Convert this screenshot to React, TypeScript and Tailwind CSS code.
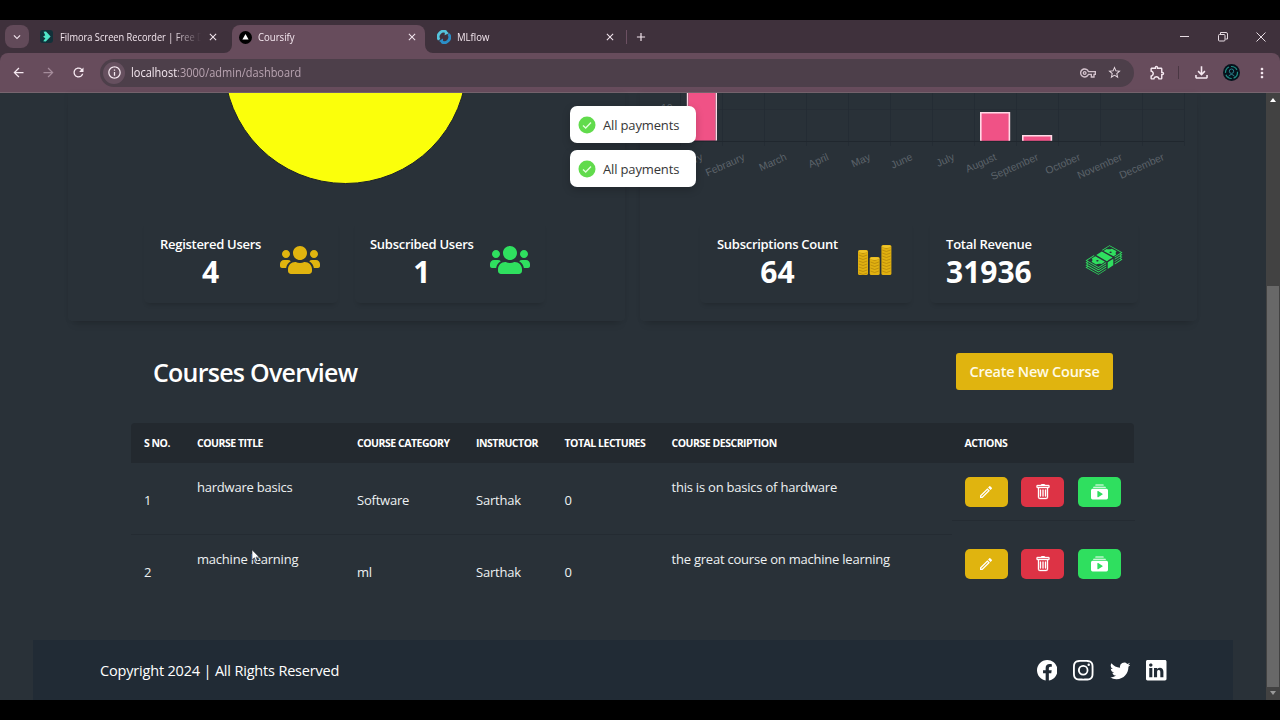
import type { ReactNode } from "react";
import { BsCollectionPlayFill, BsFacebook, BsInstagram, BsLinkedin, BsTrash, BsTwitter } from "react-icons/bs";
import { FaUsers } from "react-icons/fa";
import { GiMoneyStack } from "react-icons/gi";
import {
  MdArrowBack,
  MdArrowForward,
  MdMoreVert,
  MdOutlineExtension,
  MdOutlineFileDownload,
  MdOutlineInfo,
  MdOutlineModeEdit,
  MdOutlineVpnKey,
  MdRefresh,
  MdStarBorder,
  MdClose,
  MdAdd,
  MdKeyboardArrowDown,
} from "react-icons/md";

function TabStrip() {
  return (
    <div className="flex h-[33px] shrink-0 bg-[#3f313c] text-[11px] text-[#f3e6ee]">
      <div className="flex w-[232px] items-center pl-[5px]">
        <div className="flex h-[23px] w-[24px] items-center justify-center rounded-[8px] bg-[#624a59]">
          <MdKeyboardArrowDown size={14} />
        </div>
        <div className="ml-[11px] flex h-[13px] w-[13px] items-center justify-center rounded-[3px] bg-[#12313a]">
          <svg width="9" height="11" viewBox="0 0 9 11">
            <path d="M1.6.7 4 .4 8.6 5.4 3.8 10.6 1.2 10.3 3.4 7.3 1 5.8 3.2 4.2Z" fill="#4fe6c8" />
          </svg>
        </div>
        <div className="ml-[7px] w-[141px] overflow-hidden pt-px whitespace-nowrap [mask-image:linear-gradient(to_right,black_80%,transparent)]">
          <span className="inline-block origin-left scale-x-[0.84]">Filmora Screen Recorder | Free D</span>
        </div>
        <MdClose size={12} className="ml-[6px]" />
      </div>
      <div className="relative mt-[5px] flex w-[193px] items-center rounded-t-[8px] bg-[#674c5c] pb-[4px] pl-[7px]">
        <svg className="absolute bottom-0 -left-[8px]" width="8" height="8">
          <path d="M8 0V8H0A8 8 0 0 0 8 0Z" fill="#674c5c" />
        </svg>
        <svg className="absolute -right-[8px] bottom-0" width="8" height="8">
          <path d="M0 0V8H8A8 8 0 0 1 0 0Z" fill="#674c5c" />
        </svg>
        <svg width="13" height="13" viewBox="0 0 13 13">
          <circle cx="6.5" cy="6.5" r="6.5" fill="#000" />
          <path d="M6.5 3 9.6 8.6H3.4Z" fill="#fff" />
        </svg>
        <span className="ml-[6px] inline-block w-[146px] origin-left">
          <span className="inline-block origin-left scale-x-[0.87]">Coursify</span>
        </span>
        <MdClose size={12} className="ml-[2px]" />
      </div>
      <div className="flex flex-1 items-center pl-[12px]">
        <svg width="14" height="14" viewBox="0 0 14 14" fill="none" strokeWidth="2.8">
          <path d="M2.2 9.8A5.4 5.4 0 0 1 9.6 2.2" stroke="#55c4dc" />
          <path d="M11.6 4A5.4 5.4 0 0 1 4.4 11.8" stroke="#2b8fc8" />
          <path d="M8.2.2 12 3.2 7.6 5.2Z" fill="#55c4dc" />
          <path d="M6 8.6 2 11 6.2 13.8Z" fill="#2b8fc8" />
        </svg>
        <span className="ml-[6px] w-[147px] pt-px">
          <span className="inline-block origin-left scale-x-[0.87]">MLflow</span>
        </span>
        <MdClose size={12} />
        <div className="ml-[10px] h-[14px] w-px bg-[#6c5062]" />
        <MdAdd size={14} className="ml-[7px]" />
        <div className="ml-auto flex items-center gap-[26px] pr-[13px]">
          <svg width="12" height="12" stroke="#e6dbe2" fill="none">
            <path d="M1 5.5H10" />
          </svg>
          <svg width="12" height="12" stroke="#e6dbe2" fill="none">
            <rect x="1.5" y="3.5" width="6.5" height="6.5" rx="1" />
            <path d="M3.5 3V1.5H9Q10.5 1.5 10.5 3V8H8.5" />
          </svg>
          <svg width="12" height="12" stroke="#e6dbe2" fill="none">
            <path d="M1.5 1.5 10.5 10.5M10.5 1.5 1.5 10.5" />
          </svg>
        </div>
      </div>
    </div>
  );
}

function AddressBar() {
  return (
    <div className="shrink-0 bg-[#3f313c]">
      <div className="flex h-[40px] items-center rounded-t-[8px] border-b border-[#77656f] bg-[#674c5c] text-[#f6e9f1]">
        <MdArrowBack size={15} className="ml-[11px]" />
        <MdArrowForward size={15} className="ml-[15px] text-[#a58c9b]" />
        <MdRefresh size={15} className="ml-[15px]" />
        <div className="ml-[14px] flex h-[28px] w-[1034px] items-center rounded-full bg-[#4d3f4a] pl-[3px]">
          <div className="flex h-[22px] w-[22px] items-center justify-center rounded-full bg-[#66505f]">
            <MdOutlineInfo size={15} />
          </div>
          <span className="ml-[6px] text-[12px] text-[#b9a4b1]">
            <span className="inline-block origin-left scale-x-[0.917] whitespace-nowrap">
              <span className="text-[#f6e9f1]">localhost</span>:3000/admin/dashboard
            </span>
          </span>
          <MdOutlineVpnKey size={16} className="mr-[11px] ml-auto text-[#d3c2cc]" />
          <MdStarBorder size={15} className="mr-[12px] text-[#e6d8e0]" />
        </div>
        <MdOutlineExtension size={17} className="ml-[15px]" />
        <div className="ml-[12px] h-[13px] w-px bg-[#4a3743]" />
        <MdOutlineFileDownload size={19} className="ml-[13px]" />
        <svg className="ml-[12px]" width="17" height="17" viewBox="0 0 17 17">
          <circle cx="8.5" cy="8.5" r="8.5" fill="#06121c" />
          <circle cx="8.5" cy="8.5" r="6" fill="none" stroke="#1e8f86" strokeWidth="1.2" strokeDasharray="7 2" />
          <circle cx="8.5" cy="7.2" r="2.2" fill="none" stroke="#2a7f8c" />
          <path d="M5.5 12.2Q8.5 8.8 11.5 12.2" fill="none" stroke="#2a7f8c" />
        </svg>
        <MdMoreVert size={16} className="ml-[14px]" />
      </div>
    </div>
  );
}

const months = [
  "January", "Febraury", "March", "April", "May", "June",
  "July", "August", "September", "October", "November", "December",
];

function BarChart() {
  return (
    <svg className="block" width="557" height="127" viewBox="640 93 557 127">
      <g stroke="#242c34">
        {[...months, ""].map((_, i) => (
          <path key={i} d={`M${680.5 + i * 42} 93V146`} />
        ))}
        <path d="M680 109.5H1184" strokeOpacity="0.6" />
        <path d="M672 141.5H1184" stroke="#20272e" />
      </g>
      <g fill="#f05286" stroke="#ffd9e6" strokeWidth="1.6">
        <path d="M687.6 90V140.5M716.2 90V140.5" />
        <rect x="688.4" y="90" width="27" height="50.5" stroke="none" />
        <path d="M980.8 140.8V112.8H1009.4V140.8" />
        <path d="M1022.8 140.8V135.8H1051.4V140.8" />
      </g>
      <text x="661" y="112" fill="#5c636a" fontSize="10.5">10</text>
      <g fill="#5c636a" fontSize="10.4" textAnchor="end">
        {months.map((m, i) => {
          const x = 703.5 + i * 41.95;
          return (
            <text key={m} x={x} y={159.5} transform={`rotate(-24 ${x} 159.5)`}>
              {m}
            </text>
          );
        })}
      </g>
    </svg>
  );
}

function CoinStack({ x, top }: { x: number; top: number }) {
  const rows = Math.floor((29 - top) / 3);
  return (
    <g>
      <rect x={x} y={top} width="10" height={30 - top} rx="1.6" fill="#e0b010" />
      <g fill="none" stroke="#b0830a" strokeWidth="0.7">
        {Array.from({ length: rows }, (_, i) => (
          <path key={i} d={`M${x + 0.8} ${top + 2 + i * 3}Q${x + 5} ${top + 5 + i * 3} ${x + 9.2} ${top + 2 + i * 3}`} />
        ))}
      </g>
      <ellipse cx={x + 5} cy={top + 1.6} rx="4.4" ry="1.3" fill="#f0c52a" />
    </g>
  );
}

function CoinStacks() {
  return (
    <svg width="40" height="30" viewBox="0 0 40 30">
      <CoinStack x={3} top={5} />
      <CoinStack x={14.7} top={12} />
      <CoinStack x={26.4} top={0} />
    </svg>
  );
}

function Stat({ label, value, icon, className }: { label: string; value: string; icon: ReactNode; className: string }) {
  return (
    <div className={`flex h-[83px] items-center rounded-[5px] pb-[3px] shadow-[0_4px_5px_-3px_rgba(0,0,0,0.2)] ${className}`}>
      <div className="flex flex-col items-center pt-[4px] whitespace-nowrap text-white">
        <div className="text-[13px] leading-[20px] font-semibold tracking-[-0.28px]">{label}</div>
        <div className="text-[30px] leading-[36px] font-bold">{value}</div>
      </div>
      {icon}
    </div>
  );
}

function Toast() {
  return (
    <div className="flex h-[37px] w-[126px] items-center rounded-[7px] bg-white pl-[8px] shadow-[0_3px_8px_rgba(0,0,0,0.2)]">
      <svg width="18" height="18" viewBox="0 0 18 18" fill="none">
        <circle cx="9" cy="9" r="8.5" fill="#61db4c" />
        <path d="M5 9.4 7.7 12 13 6.6" stroke="#e2ffdb" strokeWidth="1.4" />
      </svg>
      <span className="ml-[7px] pt-[2px] text-[13px] tracking-[-0.15px] whitespace-nowrap text-[#363636]">All payments</span>
    </div>
  );
}

const courses = [
  { title: "hardware basics", category: "Software", description: "this is on basics of hardware" },
  { title: "machine learning", category: "ml", description: "the great course on machine learning" },
];

const columns = "grid grid-cols-[53px_160px_119px_88.5px_107px_293px_183px] *:pl-[13px]";

function CourseTable() {
  return (
    <div className="mx-[131px] mt-[33px] w-[1003px] text-[13px] whitespace-nowrap text-[#eef1f3]">
      <div className={`${columns} h-[40px] items-center rounded-t-[4px] bg-[#23292f] pt-[2px] text-[10.5px] font-bold tracking-[-0.48px] text-white`}>
        <div>S NO.</div>
        <div>COURSE TITLE</div>
        <div>COURSE CATEGORY</div>
        <div>INSTRUCTOR</div>
        <div>TOTAL LECTURES</div>
        <div>COURSE DESCRIPTION</div>
        <div>ACTIONS</div>
      </div>
      {courses.map((c, i) => (
        <div key={c.title} className={`${columns} h-[72px] tracking-[-0.22px] ${i === 0 ? "[&>*:not(:last-child)]:border-b *:border-[#242b32]" : ""}`}>
          <div className="pt-[27px] leading-5">{i + 1}</div>
          <div className="pt-[14px] leading-5">{c.title}</div>
          <div className="pt-[27px] leading-5">{c.category}</div>
          <div className="pt-[27px] leading-5">Sarthak</div>
          <div className="pt-[27px] leading-5">0</div>
          <div className="pt-[14px] leading-5">{c.description}</div>
          <div className={`flex h-[58px] gap-[13.3px] pt-[14px] text-white ${i === 0 ? "border-b" : ""}`}>
            <button className="flex h-[30px] w-[43.3px] items-center justify-center rounded-[5px] bg-[#e0b40f]">
              <MdOutlineModeEdit size={16} />
            </button>
            <button className="flex h-[30px] w-[43.3px] items-center justify-center rounded-[5px] bg-[#dd3345]">
              <BsTrash size={16} strokeWidth={0.35} />
            </button>
            <button className="flex h-[30px] w-[43.3px] items-center justify-center rounded-[5px] bg-[#2fdf5f]">
              <BsCollectionPlayFill size={17} />
            </button>
          </div>
        </div>
      ))}
    </div>
  );
}

function Scrollbar() {
  return (
    <div className="flex h-full w-[14px] shrink-0 flex-col items-center bg-[#424242]">
      <svg className="mt-[4px]" width="8" height="6">
        <path d="M4 1 7 5H1Z" fill="#fff" />
      </svg>
      <div className="mt-[183px] h-[401px] w-[12px] bg-[#686868]" />
      <svg className="mt-[3px]" width="8" height="6">
        <path d="M4 5 7 1H1Z" fill="#9a9a9a" />
      </svg>
    </div>
  );
}

export default function App() {
  return (
    <div className="flex h-[720px] w-[1280px] flex-col overflow-hidden bg-black py-[20px] font-['Open_Sans',sans-serif]">
      <TabStrip />
      <AddressBar />
      <div className="relative flex h-[607px] shrink-0 bg-[#293138]">
        <div className="flex w-[1266px] flex-col">
          <div className="flex h-[228px] shrink-0 gap-[15px] pl-[68px]">
            <div className="w-[557px] rounded-b-[4px] shadow-[0_8px_8px_-6px_rgba(0,0,0,0.18),0_0_5px_rgba(0,0,0,0.06)]">
              <svg className="block" width="557" height="127" viewBox="68 93 557 127">
                <circle cx="345.5" cy="62" r="121.5" fill="#fbff0b" stroke="#1b2128" strokeWidth="1" />
              </svg>
              <div className="flex pl-[76px]">
                <Stat className="w-[194px] pl-[16px]" label="Registered Users" value="4" icon={<FaUsers size={40} className="ml-[19px] text-[#e0b40f]" />} />
                <Stat className="ml-[17px] w-[190px] pl-[15px]" label="Subscribed Users" value="1" icon={<FaUsers size={40} className="ml-[16px] text-[#2fdf5f]" />} />
              </div>
            </div>
            <div className="w-[557px] rounded-b-[4px] font-['Liberation_Sans',sans-serif] shadow-[0_8px_8px_-6px_rgba(0,0,0,0.18),0_0_5px_rgba(0,0,0,0.06)]">
              <BarChart />
              <div className="flex pl-[60px] font-['Open_Sans',sans-serif]">
                <Stat className="w-[212px] pl-[17px]" label="Subscriptions Count" value="64" icon={<span className="ml-[17px]"><CoinStacks /></span>} />
                <Stat className="ml-[18px] w-[208px] pl-[16px]" label="Total Revenue" value="31936" icon={<GiMoneyStack size={40} className="ml-[52px] text-[#2fdf5f]" />} />
              </div>
            </div>
          </div>
          <div className="mt-[32px] flex h-[37px] items-center justify-between pr-[153px] pl-[153px]">
            <h2 className="pt-[3px] text-[25px] font-semibold tracking-[-0.75px] text-white">Courses Overview</h2>
            <button className="h-[37px] w-[157px] rounded-[3px] bg-[#e0b40f] text-[14.5px] font-semibold tracking-[-0.25px] whitespace-nowrap text-[#fffbe6]">
              Create New Course
            </button>
          </div>
          <CourseTable />
          <footer className="mt-auto ml-[33px] flex h-[60px] w-[1200px] shrink-0 items-center justify-between bg-[#212b35] pr-[66.5px] pl-[67px] text-white">
            <span className="pt-[2px] text-[14.5px] tracking-[-0.18px]">Copyright 2024 | All Rights Reserved</span>
            <div className="flex gap-[16px] pt-px">
              <BsFacebook size={20.5} />
              <BsInstagram size={20.5} />
              <BsTwitter size={20.5} />
              <BsLinkedin size={20.5} />
            </div>
          </footer>
        </div>
        <Scrollbar />
        <div className="absolute top-[13px] left-[570px] flex flex-col gap-[7px]">
          <Toast />
          <Toast />
        </div>
        <svg className="absolute top-[456px] left-[251px]" width="11" height="15" viewBox="0 0 11 15">
          <path d="M1 .8V11L3.4 8.8 5 12.6 6.6 11.9 5 8.2H8.3Z" fill="#fff" stroke="#20262c" strokeWidth="0.6" />
        </svg>
      </div>
    </div>
  );
}
